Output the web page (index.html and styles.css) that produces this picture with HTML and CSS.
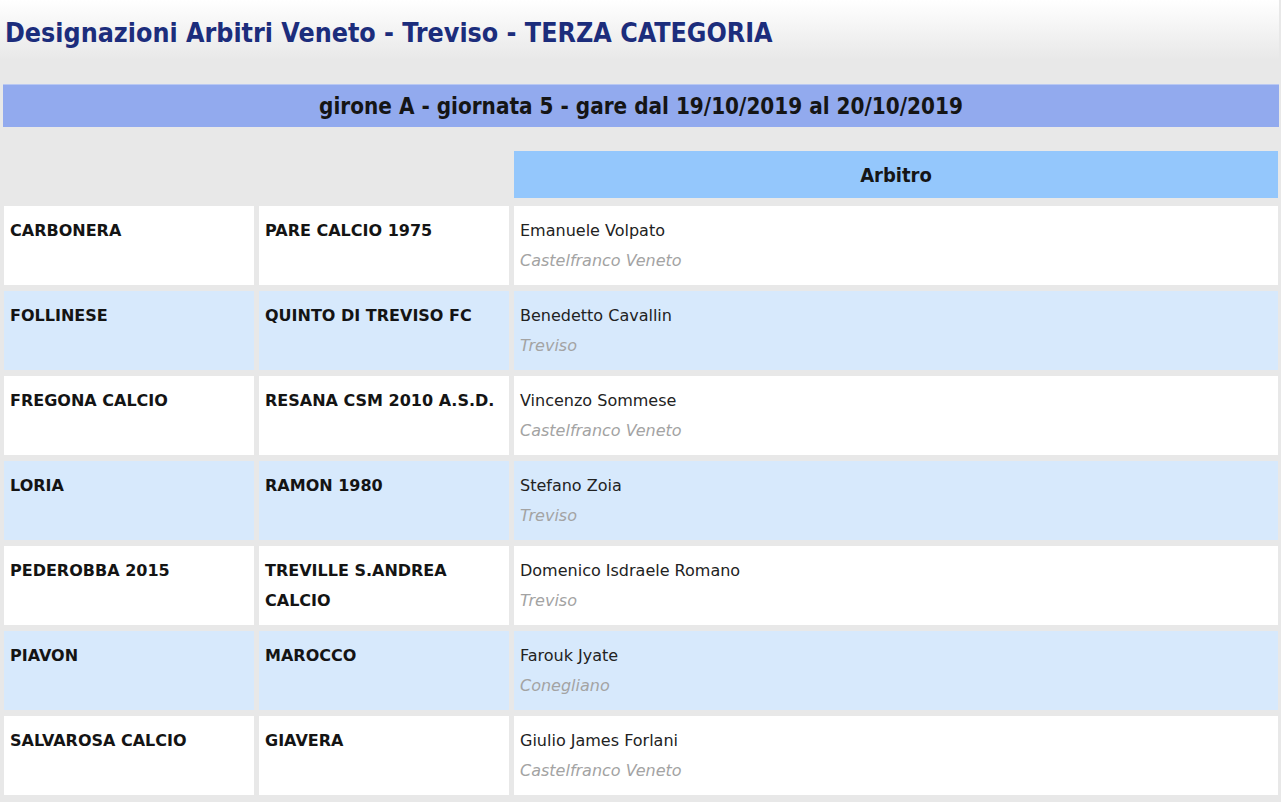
FILE: index.html
```html
<!DOCTYPE html>
<html lang="it">
<head>
<meta charset="utf-8">
<title>Designazioni Arbitri Veneto - Treviso - TERZA CATEGORIA</title>
<link rel="stylesheet" href="styles.css">
</head>
<body>
<div class="page">
  <h1 class="title">Designazioni Arbitri Veneto - Treviso - TERZA CATEGORIA</h1>
  <div class="girone">girone A - giornata 5 - gare dal 19/10/2019 al 20/10/2019</div>
  <div class="grid">
    <div class="head">Arbitro</div>

    <div class="cell team">CARBONERA</div>
    <div class="cell team">PARE CALCIO 1975</div>
    <div class="cell ref"><span class="name">Emanuele Volpato</span><span class="city">Castelfranco Veneto</span></div>

    <div class="cell team alt">FOLLINESE</div>
    <div class="cell team alt">QUINTO DI TREVISO FC</div>
    <div class="cell ref alt"><span class="name">Benedetto Cavallin</span><span class="city">Treviso</span></div>

    <div class="cell team">FREGONA CALCIO</div>
    <div class="cell team">RESANA CSM 2010 A.S.D.</div>
    <div class="cell ref"><span class="name">Vincenzo Sommese</span><span class="city">Castelfranco Veneto</span></div>

    <div class="cell team alt">LORIA</div>
    <div class="cell team alt">RAMON 1980</div>
    <div class="cell ref alt"><span class="name">Stefano Zoia</span><span class="city">Treviso</span></div>

    <div class="cell team">PEDEROBBA 2015</div>
    <div class="cell team">TREVILLE S.ANDREA CALCIO</div>
    <div class="cell ref"><span class="name">Domenico Isdraele Romano</span><span class="city">Treviso</span></div>

    <div class="cell team alt">PIAVON</div>
    <div class="cell team alt">MAROCCO</div>
    <div class="cell ref alt"><span class="name">Farouk Jyate</span><span class="city">Conegliano</span></div>

    <div class="cell team">SALVAROSA CALCIO</div>
    <div class="cell team">GIAVERA</div>
    <div class="cell ref"><span class="name">Giulio James Forlani</span><span class="city">Castelfranco Veneto</span></div>
  </div>
</div>
</body>
</html>
```

FILE: styles.css
```css
html, body {
  margin: 0;
  padding: 0;
}
body {
  background: #e8e8e8;
  font-family: "DejaVu Sans", "Liberation Sans", sans-serif;
  color: #1e1e1e;
}
.page {
  width: 1279px;
  background: linear-gradient(to bottom, #ffffff 0px, #e8e8e8 60px, #e8e8e8 100%);
  padding-bottom: 8px;
}
.title {
  margin: 0;
  padding: 17px 0 0 5px;
  height: 70px;
  box-sizing: border-box;
  font-family: "DejaVu Sans Condensed", "DejaVu Sans", sans-serif;
  font-size: 26.6px;
  line-height: 32px;
  font-weight: bold;
  color: #1c2d7c;
}
.girone {
  margin: 14px 0 0 3px;
  height: 43px;
  box-sizing: border-box;
  border-top: 1px solid #b9c8f2;
  background: #92aaee;
  text-align: center;
  font-family: "DejaVu Sans Condensed", "DejaVu Sans", sans-serif;
  font-size: 22.3px;
  font-weight: bold;
  line-height: 42px;
  color: #151515;
}
.grid {
  display: grid;
  grid-template-columns: 250px 250px 1fr;
  column-gap: 5px;
  row-gap: 6px;
  margin: 24px 0 0 4px;
  width: 1274px;
}
.head {
  grid-column: 3;
  height: 47px;
  background: #94c7fc;
  text-align: center;
  font-family: "DejaVu Sans Condensed", "DejaVu Sans", sans-serif;
  font-size: 20px;
  font-weight: bold;
  line-height: 49px;
  color: #151515;
  margin-bottom: 2px;
}
.cell {
  background: #ffffff;
  min-height: 79px;
  box-sizing: border-box;
  padding: 10px 6px 9px 6px;
  line-height: 30px;
}
.cell.alt {
  background: #d7e9fc;
}
.team {
  font-size: 16px;
  font-weight: bold;
  color: #141414;
}
.ref {
  padding-left: 6px;
  font-size: 16px;
  display: flex;
  flex-direction: column;
}
.name {
  color: #222222;
}
.city {
  color: #a3a3a3;
  font-style: italic;
}
```
